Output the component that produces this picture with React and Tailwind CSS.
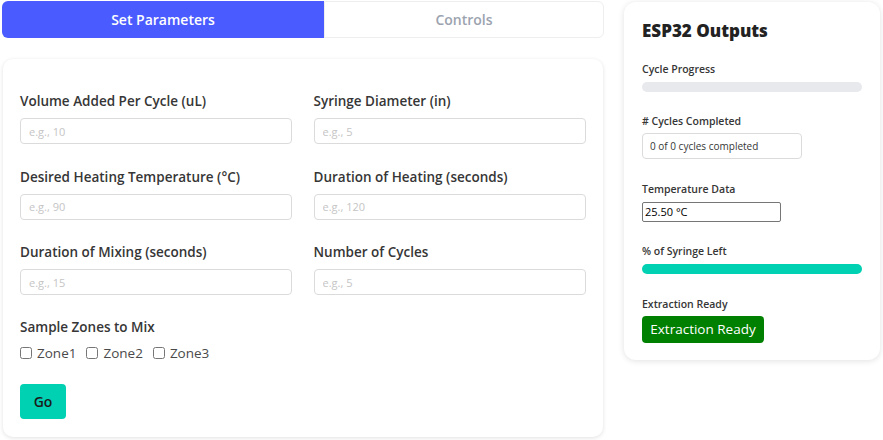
export default function App() {
  const font = { fontFamily: '"Open Sans", "Noto Sans", sans-serif' };
  const fields = [
    ["Volume Added Per Cycle (uL)", "e.g., 10"],
    ["Syringe Diameter (in)", "e.g., 5"],
    ["Desired Heating Temperature (°C)", "e.g., 90"],
    ["Duration of Heating (seconds)", "e.g., 120"],
    ["Duration of Mixing (seconds)", "e.g., 15"],
    ["Number of Cycles", "e.g., 5"],
  ];
  return (
    <div className="w-[883px] h-[440px] bg-white flex gap-[20px] pt-[1px] pl-[2px] overflow-hidden text-[#333]" style={font}>
      <div className="w-[602px] flex flex-col">
        <div className="flex h-[37px]">
          <div className="w-[322px] bg-[#4a5cff] rounded-l-[6px] text-white text-[14px] font-semibold flex items-center justify-center">Set Parameters</div>
          <div className="flex-1 border border-[#eeeeee] rounded-r-[6px] text-[#9ca3af] text-[14px] font-semibold flex items-center justify-center">Controls</div>
        </div>
        <div className="mt-[21px] ml-[1px] w-[600px] h-[378px] rounded-[10px] bg-white shadow-[0_1px_4px_rgba(0,0,0,0.12)] px-[17px] pt-[31px]">
          <div className="grid grid-cols-2 gap-x-[21px] gap-y-[21.5px]">
            {fields.map(([l, p]) => (
              <div key={l} className="flex flex-col">
                <label className="text-[13.5px] font-semibold text-[#363636] h-[23px] leading-[23px]">{l}</label>
                <input placeholder={p} className="mt-[5px] h-[26px] w-[272px] border border-[#dbdbdb] rounded-[4px] px-[8px] text-[11px] placeholder:text-[#c5c5c5] outline-none" />
              </div>
            ))}
          </div>
          <div className="mt-[21px] text-[13.5px] font-semibold text-[#363636] leading-[23px]">Sample Zones to Mix</div>
          <div className="mt-[4px] flex items-center gap-[10px] text-[13.5px] text-[#4a4a4a]">
            {["Zone1", "Zone2", "Zone3"].map((z) => (
              <label key={z} className="flex items-center gap-[5px]">
                <input type="checkbox" className="w-[12px] h-[12px]" />
                {z}
              </label>
            ))}
          </div>
          <button className="mt-[21px] w-[46px] h-[35px] bg-[#00d1b2] rounded-[4px] text-[14px] font-semibold text-[#1a1a1a]">Go</button>
        </div>
      </div>
      <div className="w-[256px] h-[358px] mt-[1px] rounded-[12px] bg-white shadow-[0_1px_6px_rgba(0,0,0,0.12)] px-[18px] pt-[17px]">
        <div className="text-[17px] font-extrabold text-[#222] leading-[24px]">ESP32 Outputs</div>
        <div className="mt-[19px] text-[10.5px] font-semibold text-[#363636] leading-[14px]">Cycle Progress</div>
        <div className="mt-[6px] h-[10px] w-[220px] rounded-full bg-[#e8e9ed]"></div>
        <div className="mt-[22px] text-[10.5px] font-semibold text-[#363636] leading-[14px]">
          # Cycles Completed
        </div>
        <div className="mt-[5px] h-[26px] w-[160px] border border-[#dbdbdb] rounded-[4px] px-[7px] text-[10px] flex items-center text-[#363636]">0 of 0 cycles completed</div>
        <div className="mt-[23px] text-[10.5px] font-semibold text-[#363636] leading-[14px]">Temperature Data</div>
        <div className="mt-[6px] h-[20px] w-[139px] border border-[#767676] rounded-[2px] px-[2px] text-[11px] flex items-center text-black">25.50 °C</div>
        <div className="mt-[22px] text-[10.5px] font-semibold text-[#363636] leading-[14px]">% of Syringe Left</div>
        <div className="mt-[6px] h-[10px] w-[220px] rounded-full bg-[#00d1b2]"></div>
        <div className="mt-[23px] text-[10.5px] font-semibold text-[#363636] leading-[14px]">Extraction Ready</div>
        <div className="mt-[5px] h-[27px] w-[122px] bg-[#008000] rounded-[4px] text-white text-[13.5px] flex items-center justify-center">Extraction Ready</div>
      </div>
    </div>
  );
}
